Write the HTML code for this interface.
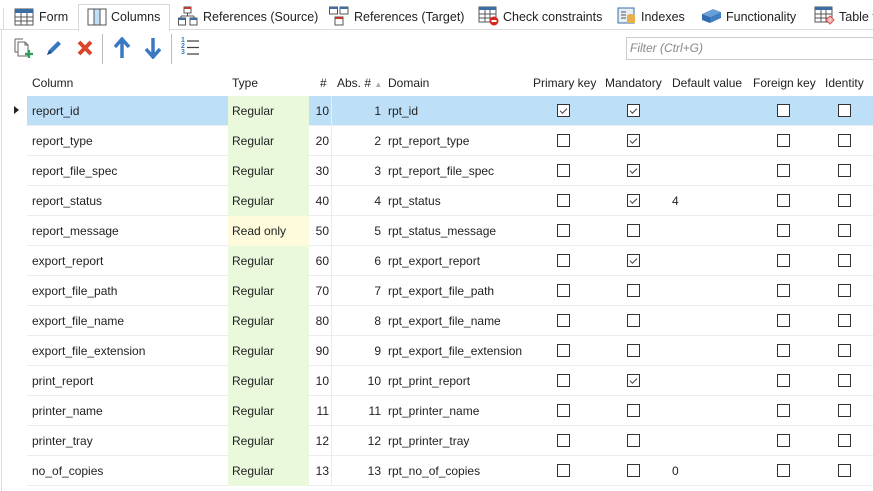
<!DOCTYPE html>
<html><head><meta charset="utf-8"><style>
*{margin:0;padding:0;box-sizing:border-box}
body{width:873px;height:491px;overflow:hidden;background:#fff;font-family:"Liberation Sans",sans-serif;font-size:12px;color:#222;position:relative}
.a{position:absolute;white-space:nowrap}
.tab{position:absolute;top:4px;height:26px;line-height:26px;font-size:12.5px;color:#222;white-space:nowrap}
.tab svg{position:absolute;left:0;top:4px}
.tab span{position:absolute;top:0;white-space:nowrap}
.row{position:absolute;left:27px;width:846px;height:30px;border-bottom:1px solid #ececec}
.cell{position:absolute;top:1px;height:29px;line-height:29px;white-space:nowrap}
.cb{position:absolute;width:13px;height:13px;border:1px solid #333;background:#fff;top:8px}
.cb.c::after{content:"";position:absolute;width:6px;height:3px;border-left:1.5px solid #444;border-bottom:1.5px solid #444;transform:rotate(-45deg);top:3px;left:2px}
.hd{position:absolute;top:76px;font-size:12px;color:#222;white-space:nowrap}
</style></head><body>
<div class="a" style="left:0;top:29px;width:873px;height:1px;background:#dcdcdc"></div>
<div class="a" style="left:3px;top:8px;width:1px;height:22px;background:#dcdcdc"></div>
<div class="a" style="left:78px;top:4px;width:92px;height:27px;background:#fff;border:1px solid #d8d8d8;border-bottom:none"></div>
<div class="tab" style="left:14px"><svg width="20" height="18"><rect x="1" y="1" width="18" height="16" fill="#fff" stroke="#555"/><rect x="1" y="1" width="18" height="4" fill="#3a6ea5"/><path d="M1 9H19M1 13H19M7 5V17M13 5V17" stroke="#555"/></svg><span style="left:25px">Form</span></div>
<div class="tab" style="left:87px"><svg width="20" height="18"><rect x="1" y="1" width="18" height="16" fill="#fff" stroke="#555"/><rect x="7" y="1" width="6" height="16" fill="#bfe0f7" stroke="#555"/></svg><span style="left:24px">Columns</span></div>
<div class="tab" style="left:178px"><svg width="20" height="20" style="top:2px"><rect x="6" y="1" width="7" height="6" fill="#fff" stroke="#555"/><rect x="6" y="1" width="7" height="2" fill="#c0392b"/><path d="M9.5 7V10M3 10H16M3 10V12M16 10V12" stroke="#555"/><rect x="0.5" y="12" width="7" height="7" fill="#fff" stroke="#555"/><rect x="12" y="12" width="7" height="7" fill="#fff" stroke="#555"/><rect x="0.5" y="12" width="7" height="2" fill="#3a6ea5"/><rect x="12" y="12" width="7" height="2" fill="#3a6ea5"/></svg><span style="left:25px">References (Source)</span></div>
<div class="tab" style="left:329px"><svg width="20" height="20" style="top:2px"><rect x="0.5" y="1" width="8" height="7" fill="#fff" stroke="#555"/><rect x="11" y="1" width="8" height="7" fill="#fff" stroke="#555"/><rect x="0.5" y="1" width="8" height="2" fill="#3a6ea5"/><rect x="11" y="1" width="8" height="2" fill="#3a6ea5"/><rect x="6" y="11" width="8" height="8" fill="#fff" stroke="#555"/><rect x="6" y="11" width="8" height="2" fill="#c0392b"/></svg><span style="left:25px">References (Target)</span></div>
<div class="tab" style="left:478px"><svg width="22" height="20" style="top:2px"><rect x="1" y="1" width="17" height="15" fill="#fff" stroke="#555"/><rect x="1" y="1" width="17" height="3" fill="#3a6ea5"/><path d="M1 8H18M1 12H18M7 4V16M12 4V16" stroke="#555"/><circle cx="16" cy="15" r="4.5" fill="#d9261c"/><rect x="13.5" y="14" width="5" height="2" fill="#fff"/></svg><span style="left:25px">Check constraints</span></div>
<div class="tab" style="left:617px"><svg width="20" height="20" style="top:2px"><rect x="1" y="2" width="16" height="15" fill="#e8eef5" stroke="#3a6ea5"/><path d="M4 6H9M4 9H9M4 12H9" stroke="#555"/><ellipse cx="14" cy="10" rx="4" ry="2" fill="#e8b04a"/><rect x="10" y="10" width="8" height="7" fill="#e8b04a"/></svg><span style="left:24px">Indexes</span></div>
<div class="tab" style="left:701px"><svg width="22" height="20" style="top:2px"><path d="M1 8L12 3L20 6L9 11Z" fill="#6aa0d8"/><path d="M1 8L9 11V17L1 14Z" fill="#2f6db0"/><path d="M9 11L20 6V12L9 17Z" fill="#3e7ec2"/></svg><span style="left:25px">Functionality</span></div>
<div class="tab" style="left:814px"><svg width="22" height="20" style="top:2px"><rect x="1" y="1" width="17" height="15" fill="#fff" stroke="#555"/><rect x="1" y="1" width="17" height="3" fill="#3a6ea5"/><path d="M1 8H18M1 12H18M7 4V16M12 4V16" stroke="#555"/><path d="M12 14L16 10L20 14L16 18Z" fill="#f3c0c0" stroke="#d9534f"/></svg><span style="left:25px">Table t</span></div>
<div class="a" style="left:1px;top:30px;width:1px;height:461px;background:#dcdcdc"></div>
<svg class="a" style="left:14px;top:37px" width="20" height="22"><path d="M1 2H9M1 2V15H4" stroke="#666" fill="none"/><path d="M4 5H11L14 8V19H4Z" fill="#fff" stroke="#666"/><path d="M11 5V8H14" stroke="#666" fill="none"/><path d="M15 13V21M11 17H19" stroke="#2e9e5b" stroke-width="2.2"/></svg>
<svg class="a" style="left:44px;top:38px" width="20" height="20"><path d="M3 17L5 12L14 3L17 6L8 15Z" fill="#3a78c2"/><path d="M3 17L5 12L8 15Z" fill="#1d4e8a"/></svg>
<svg class="a" style="left:76px;top:39px" width="18" height="18"><path d="M3 3L15 15M15 3L3 15" stroke="#d9472b" stroke-width="4"/></svg>
<div class="a" style="left:102px;top:34px;width:1px;height:30px;background:#bbb"></div>
<svg class="a" style="left:113px;top:37px" width="18" height="22"><path d="M9 3V21" stroke="#3a78c2" stroke-width="3.5"/><path d="M2 10L9 2L16 10" stroke="#3a78c2" stroke-width="3.5" fill="none"/></svg>
<svg class="a" style="left:144px;top:37px" width="18" height="22"><path d="M9 1V19" stroke="#3a78c2" stroke-width="3.5"/><path d="M2 12L9 20L16 12" stroke="#3a78c2" stroke-width="3.5" fill="none"/></svg>
<div class="a" style="left:171px;top:34px;width:1px;height:30px;background:#bbb"></div>
<div class="a" style="left:181px;top:38px;font-size:7px;line-height:6px;color:#3a78c2;font-weight:bold">1<br>2<br>3</div>
<svg class="a" style="left:186px;top:38px" width="14" height="20"><path d="M1 3H13M1 9.5H13M1 16H13" stroke="#444" stroke-width="1.3"/></svg>
<div class="a" style="left:626px;top:37px;width:250px;height:23px;border:1px solid #ccc;padding-left:3px;line-height:21px;color:#888;font-style:italic">Filter (Ctrl+G)</div>
<div class="hd" style="left:32px">Column</div>
<div class="hd" style="left:232px">Type</div>
<div class="hd" style="left:320px">#</div>
<div class="hd" style="left:337px">Abs. # <span style="color:#aaa;font-size:8px">▲</span></div>
<div class="hd" style="left:388px">Domain</div>
<div class="hd" style="left:533px">Primary key</div>
<div class="hd" style="left:605px">Mandatory</div>
<div class="hd" style="left:672px">Default value</div>
<div class="hd" style="left:753px">Foreign key</div>
<div class="hd" style="left:825px">Identity</div>
<div class="a" style="left:14px;top:106px;width:0;height:0;border-left:5px solid #222;border-top:4px solid transparent;border-bottom:4px solid transparent"></div>
<div id="rows"></div>
<script>
var d=[["report_id","Regular",10,1,"rpt_id",1,1,""],["report_type","Regular",20,2,"rpt_report_type",0,1,""],["report_file_spec","Regular",30,3,"rpt_report_file_spec",0,1,""],["report_status","Regular",40,4,"rpt_status",0,1,"4"],["report_message","Read only",50,5,"rpt_status_message",0,0,""],["export_report","Regular",60,6,"rpt_export_report",0,1,""],["export_file_path","Regular",70,7,"rpt_export_file_path",0,0,""],["export_file_name","Regular",80,8,"rpt_export_file_name",0,0,""],["export_file_extension","Regular",90,9,"rpt_export_file_extension",0,0,""],["print_report","Regular",10,10,"rpt_print_report",0,1,""],["printer_name","Regular",11,11,"rpt_printer_name",0,0,""],["printer_tray","Regular",12,12,"rpt_printer_tray",0,0,""],["no_of_copies","Regular",13,13,"rpt_no_of_copies",0,0,"0"]];
var h="";d.forEach(function(r,i){var y=96+i*30,sel=i==0;
h+='<div class="row" style="top:'+y+'px;'+(sel?'background:#bedff8;':'')+'">'+
'<div class="cell" style="left:5px">'+r[0]+'</div>'+
'<div class="cell" style="left:201px;top:0;padding-top:1px;width:81px;height:30px;padding-left:4px;background:'+(r[1]=="Regular"?'#eaf9dc':'#fdfbdb')+'">'+r[1]+'</div>'+
'<div class="cell" style="left:282px;width:20px;text-align:right">'+r[2]+'</div>'+
'<div class="cell" style="left:304px;top:0;width:1px;height:30px;background:#ececec"></div>'+
'<div class="cell" style="left:330px;width:24px;text-align:right">'+r[3]+'</div>'+
'<div class="cell" style="left:361px">'+r[4]+'</div>'+
'<div class="cb'+(r[5]?' c':'')+'" style="left:530px"></div>'+
'<div class="cb'+(r[6]?' c':'')+'" style="left:600px"></div>'+
'<div class="cell" style="left:645px">'+r[7]+'</div>'+
'<div class="cb" style="left:750px"></div>'+
'<div class="cb" style="left:811px"></div></div>';});
document.getElementById("rows").innerHTML=h;
</script>
</body></html>
